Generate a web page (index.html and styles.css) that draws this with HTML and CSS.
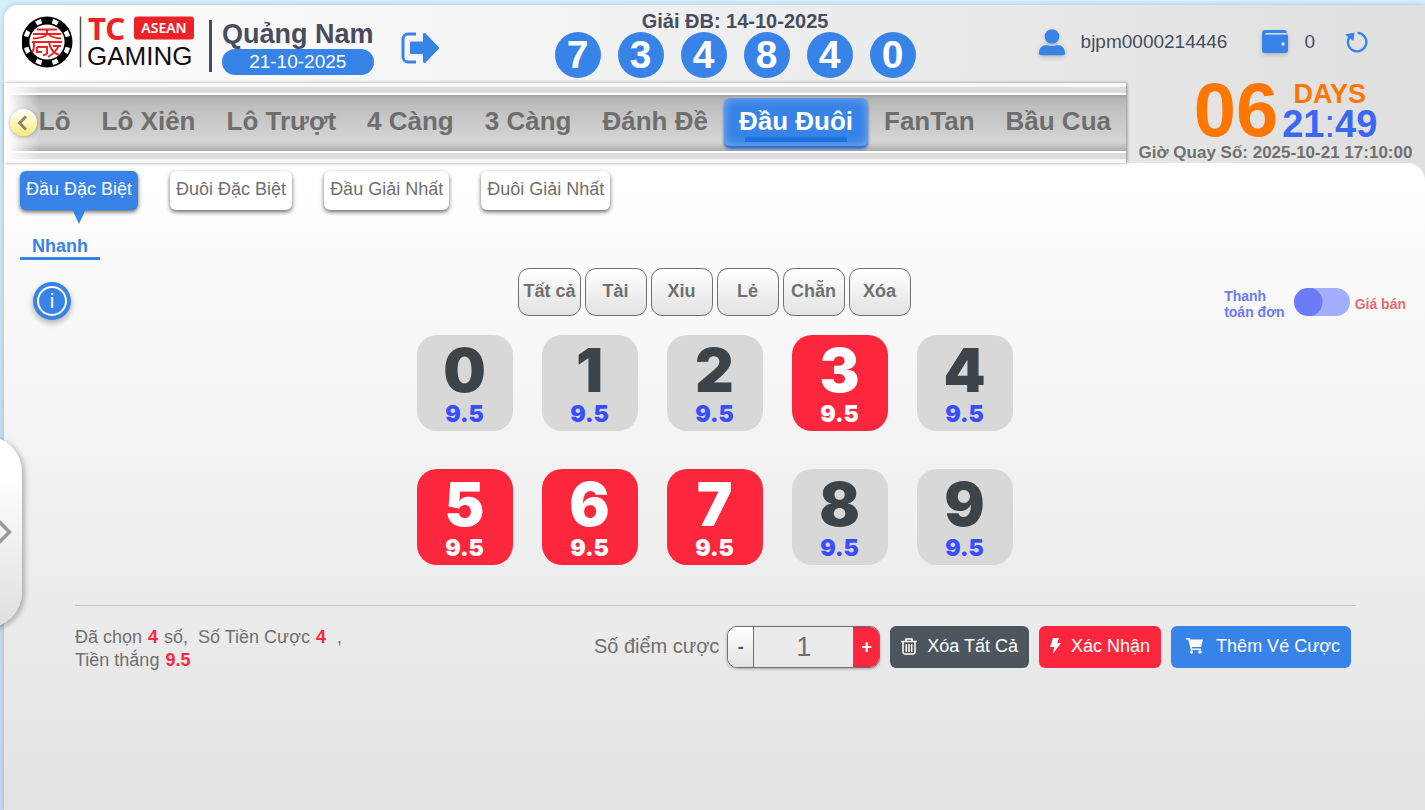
FILE: index.html
```html
<!DOCTYPE html>
<html lang="vi">
  <head>
    <meta charset="UTF-8" />
    <meta name="viewport" content="width=device-width, initial-scale=1.0" />
    <title>TC Gaming - Quảng Nam</title>
    <link rel="stylesheet" href="styles.css">
  </head>
  <body>
    <div class="app">
      <header class="header">
        <svg class="logo" width="174" height="54" viewBox="0 0 174 54" role="img" aria-label="TC Gaming ASEAN">
          <circle cx="25" cy="27" r="25.5" fill="#000" />
          <circle cx="25" cy="27" r="21.5" fill="none" stroke="#fff" stroke-width="4.6" pathLength="80" stroke-dasharray="3.4 6.6" stroke-dashoffset="-3.3" />
          <circle cx="25" cy="27" r="17.6" fill="#fff" />
          <g fill="none" stroke="#ec2227" stroke-width="2">
            <path d="M15 14.500h20M11 19h28M25 14.500v4.500c-1 2.500-5 4-14 4.500M26 19c2 2.500 6 4 13 4.500" />
            <path d="M10 27h30M12 27v4c0 4-1 5-2 6M15 32h10v6c0 1.500-2 2-4 2M15 32v5h5M27 27c1 6 4 11 10 13M37 30c-2 5-6 9-11 12M31 31h8" />
          </g>
          <path d="M58.500 1.500v51" stroke="#555" stroke-width="1.500" />
          <rect x="112" y="1.500" width="60" height="23" rx="3" fill="#ec2227" />
          <text x="66" y="25" class="logo-tc">TC</text>
          <text x="142" y="18" class="logo-region">ASEAN</text>
          <text x="65" y="50" class="logo-name">GAMING</text>
        </svg>

        <div class="game">
          <h1>Quảng Nam</h1>
          <span class="game-date">21-10-2025</span>
        </div>
        <button class="icon-btn exit-btn" aria-label="Thoát">
          <svg width="38" height="32" viewBox="0 0 38 32">
            <path d="M15 2H7a5 5 0 0 0-5 5v18a5 5 0 0 0 5 5h8" fill="none" stroke="#3883e7" stroke-width="3" />
            <path d="M9 10.500a1 1 0 0 1 1-1h12V2.500a1.500 1.500 0 0 1 2.600-1l13 13.500a1.500 1.500 0 0 1 0 2l-13 13.500a1.500 1.500 0 0 1-2.600-1v-7.500H10a1 1 0 0 1-1-1z" fill="#3883e7" />
          </svg>
        </button>

        <div class="result">
          <div class="result-title">Giải ĐB: 14-10-2025</div>
          <div class="balls">
            <span>7</span><span>3</span><span>4</span><span>8</span><span>4</span><span>0</span>
          </div>
        </div>

        <div class="account">
          <svg class="shade" width="26" height="27" viewBox="0 0 26 27" fill="#3883e7">
            <circle cx="13" cy="7.500" r="7.300" />
            <path d="M0 24c0-5 3-8 8-8 3 1.200 7 1.200 10 0 5 0 8 3 8 8 0 1.500-.8 2.200-2 2.200H2C.8 26.200 0 25.500 0 24z" />
          </svg>
          <span class="username">bjpm0000214446</span>
          <svg class="shade wallet" width="26" height="24" viewBox="0 0 26 24">
            <path d="M3 0h20a1.500 1.500 0 0 1 1.500 1.500V4A3 3 0 0 1 26 7v13a3 3 0 0 1-3 3H3a3 3 0 0 1-3-3V3a3 3 0 0 1 3-3z" fill="#3883e7" />
            <path d="M3.500 3.800H24.500" stroke="#e4e4e4" stroke-width="1.500" />
            <circle cx="21" cy="14" r="1.700" fill="#e4e4e4" />
          </svg>
          <span class="balance">0</span>
          <button class="icon-btn" aria-label="Làm mới">
            <svg width="24" height="22" viewBox="0 0 24 22">
              <path d="M12.500 1.900A9.200 9.200 0 1 1 4.500 6" fill="none" stroke="#3883e7" stroke-width="2.400" />
              <path d="M0 3.500l9.500-2L8.500 10z" fill="#3883e7" />
            </svg>
          </button>
        </div>
      </header>

      <div class="topbar">
        <nav class="menu">
          <div class="menu-track">
            <a href="#">Lô</a>
            <a href="#">Lô Xiên</a>
            <a href="#">Lô Trượt</a>
            <a href="#">4 Càng</a>
            <a href="#">3 Càng</a>
            <a href="#">Đánh Đề</a>
            <a href="#" class="active">Đầu Đuôi</a>
            <a href="#">FanTan</a>
            <a href="#">Bầu Cua</a>
          </div>
          <div class="menu-fade"></div>
          <button class="menu-prev" aria-label="Trước">
            <svg width="13" height="16" viewBox="0 0 13 16">
              <path d="M9 1.500L2.500 8l6.500 6.500" fill="none" stroke="#8a8877" stroke-width="3" />
            </svg>
          </button>
        </nav>

        <div class="countdown">
          <div class="countdown-main">
            <span class="countdown-days">06</span>
            <div class="countdown-side">
              <span class="countdown-unit">DAYS</span>
              <span class="countdown-time">21<i>:</i>49</span>
            </div>
          </div>
          <div class="draw-time">Giờ Quay Số: 2025-10-21 17:10:00</div>
        </div>
      </div>

      <main class="board">
        <div class="tabs">
          <button class="tab active">Đầu Đặc Biệt</button>
          <button class="tab">Đuôi Đặc Biệt</button>
          <button class="tab">Đầu Giải Nhất</button>
          <button class="tab">Đuôi Giải Nhất</button>
        </div>
        <a href="#" class="mode">Nhanh</a>

        <div class="tools">
          <button class="info-btn" aria-label="Hướng dẫn"><span>i</span></button>
          <div class="filters">
            <button>Tất cả</button>
            <button>Tài</button>
            <button>Xỉu</button>
            <button>Lẻ</button>
            <button>Chẵn</button>
            <button>Xóa</button>
          </div>
          <label class="price-switch">
            <span class="price-single">Thanh<br>toán đơn</span>
            <input type="checkbox" />
            <span class="price-sell">Giá bán</span>
          </label>
        </div>

        <div class="numbers">
          <button class="number"><b>0</b><span>9.5</span></button>
          <button class="number"><b>1</b><span>9.5</span></button>
          <button class="number"><b>2</b><span>9.5</span></button>
          <button class="number selected"><b>3</b><span>9.5</span></button>
          <button class="number"><b>4</b><span>9.5</span></button>
          <button class="number selected"><b>5</b><span>9.5</span></button>
          <button class="number selected"><b>6</b><span>9.5</span></button>
          <button class="number selected"><b>7</b><span>9.5</span></button>
          <button class="number"><b>8</b><span>9.5</span></button>
          <button class="number"><b>9</b><span>9.5</span></button>
        </div>

        <div class="bet">
          <div class="summary">
            <div>Đã chọn <b>4</b> số,&nbsp; Số Tiền Cược <b>4</b>&nbsp; ,</div>
            <div>Tiền thắng <b>9.5</b></div>
          </div>
          <label class="points-label" for="points">Số điểm cược</label>
          <div class="stepper">
            <button class="minus">-</button>
            <input type="text" id="points" value="1" />
            <button class="plus">+</button>
          </div>
          <button class="action clear-btn">
            <svg width="16" height="17" viewBox="0 0 16 17" fill="none" stroke="#fff" stroke-width="1.500">
              <path d="M0 3.500h16M5 3V1h6v2M2 4v10.500A1.700 1.700 0 0 0 3.700 16h8.600a1.700 1.700 0 0 0 1.700-1.500V4M5.300 6v8M8 6v8M10.700 6v8" />
            </svg>
            Xóa Tất Cả
          </button>
          <button class="action confirm-btn">
            <svg width="11" height="16" viewBox="0 0 11 16" fill="#fff">
              <path d="M3 0h6L7.300 5H11L2.800 16l1.400-7H0z" />
            </svg>
            Xác Nhận
          </button>
          <button class="action cart-btn">
            <svg width="17" height="16" viewBox="0 0 17 16">
              <path d="M0 .8h3l2.500 10.500H15" fill="none" stroke="#fff" stroke-width="1.600" />
              <path d="M3.500 1.500H17L15 9H5.200z" fill="#fff" />
              <circle cx="5.500" cy="14" r="1.700" fill="#fff" />
              <circle cx="14" cy="14" r="1.700" fill="#fff" />
            </svg>
            Thêm Vé Cược
          </button>
        </div>
      </main>
    </div>

    <button class="drawer" aria-label="Mở">
      <svg width="14" height="28" viewBox="0 0 14 28">
        <path d="M-3 1.500L9.500 14-3 26.500" fill="none" stroke="#999" stroke-width="3.500" />
      </svg>
    </button>
  </body>
</html>
```

FILE: styles.css
```css
* {
  box-sizing: border-box;
}
body {
  margin: 0;
  padding: 5px 0 0 4px;
  min-height: 100vh;
  font-family: "Liberation Sans", Arial, sans-serif;
  color: #707070;
  background: linear-gradient(#d5effd, #c5e2f0 50%, #c9d8f6);
}
button {
  font-family: inherit;
  cursor: pointer;
  border: none;
  padding: 0;
}
a {
  text-decoration: none;
}
.app {
  min-height: calc(100vh - 5px);
  display: flex;
  flex-direction: column;
  border-radius: 14px 0 0 0;
  background: linear-gradient(90deg, #fff, #dfdfdf);
  box-shadow: 0 0 5px rgba(0, 0, 0, 0.2);
}

/* header */
.header {
  display: flex;
  align-items: center;
  height: 78px;
  padding: 0 56px 0 18px;
}
.logo {
  display: block;
  flex: none;
  margin-bottom: 4px;
}
.logo-tc {
  font: bold 31px "Noto Sans", sans-serif;
  fill: #ec2227;
}
.logo-region {
  font: 600 14px "Noto Sans", sans-serif;
  fill: #fff;
  text-anchor: middle;
}
.logo-name {
  font: 26px "Liberation Sans", sans-serif;
  fill: #111;
}
.game {
  position: relative;
  margin: 6px 0 0 13px;
  padding-left: 13px;
}
.game::before {
  content: "";
  position: absolute;
  left: 0;
  top: 0;
  width: 3px;
  height: 52px;
  background: #474d5f;
}
.game h1 {
  margin: 0;
  font-size: 27px;
  line-height: 29px;
  color: #474d5f;
}
.game-date {
  display: block;
  height: 26px;
  border-radius: 13px;
  background: #3883e7;
  color: #fff;
  font-size: 19px;
  line-height: 25px;
  text-align: center;
}
.icon-btn {
  background: none;
  display: flex;
}
.exit-btn {
  margin: 8px 0 0 27px;
}
.result {
  margin-left: 116px;
  text-align: center;
  color: #474d5f;
  font-size: 20px;
  font-weight: bold;
}
.result-title {
  line-height: 22px;
}
.balls {
  display: flex;
  gap: 17px;
}
.balls span {
  width: 46px;
  height: 46px;
  border-radius: 50%;
  background: #3883e7;
  color: #fff;
  font-size: 39px;
  line-height: 45px;
}
.account {
  display: flex;
  align-items: center;
  margin: 0 0 4px auto;
  font-size: 19px;
  color: #474d5f;
}
.shade {
  filter: drop-shadow(0 2px 2px rgba(0, 0, 0, 0.2));
}
.username {
  margin: 0 35px 0 16px;
}
.balance {
  margin: 0 30px 0 16px;
}

/* game menu + countdown */
.topbar {
  display: flex;
  height: 80px;
}
.menu {
  position: relative;
  flex: 1;
  min-width: 0;
  border: solid #f8f8f8;
  border-width: 4px 0;
  box-shadow: 1px 0 3px rgba(0, 0, 0, 0.4);
}
.menu-track {
  display: flex;
  justify-content: flex-end;
  align-items: center;
  gap: 1px;
  height: 72px;
  padding-bottom: 2px;
  overflow: hidden;
  background: linear-gradient(#dcdcdc 6px, #fff 6px, #fff 8px, #a2a2a2 8px, #b4b4b4 12px, #c0c0c0 20px, #d2d2d2 50px, #d2d2d2 56px, #aaa 64px, #fff 64px, #fff 66px, #dcdcdc 66px);
}
.menu-track a {
  flex: none;
  height: 48px;
  padding: 0 15px;
  border-radius: 6px;
  font-size: 26px;
  font-weight: bold;
  line-height: 47px;
  color: #6e6e6e;
}
.menu-track a.active {
  position: relative;
  background: #3883e7;
  color: #fff;
  box-shadow: 0 3px 3px #2a6ac6, inset 0 0 10px rgba(255, 255, 255, 0.4);
}
.menu-track a.active::after {
  content: "";
  position: absolute;
  left: 21px;
  right: 21px;
  bottom: 4px;
  height: 5px;
  background: #1d70dd;
}
.menu-fade {
  position: absolute;
  top: -4px;
  bottom: -4px;
  left: 0;
  width: 36px;
  background: linear-gradient(90deg, #fff 10%, rgba(255, 255, 255, 0));
}
.menu-prev {
  position: absolute;
  left: 6px;
  top: 22px;
  width: 27px;
  height: 27px;
  display: flex;
  align-items: center;
  justify-content: center;
  border-radius: 50%;
  background: linear-gradient(#fff, #fdea75);
  box-shadow: 0 1px 4px rgba(0, 0, 0, 0.3);
}
.countdown {
  width: 299px;
  text-align: center;
}
.countdown-main {
  display: flex;
  justify-content: center;
  align-items: center;
  height: 54px;
  gap: 4px;
  padding-left: 20px;
}
.countdown-days {
  font-size: 76px;
  font-weight: bold;
  line-height: 54px;
  color: #f70;
}
.countdown-side {
  display: flex;
  flex-direction: column;
}
.countdown-unit {
  font-size: 27px;
  font-weight: bold;
  line-height: 27px;
  color: #f70;
}
.countdown-time {
  font-size: 38px;
  font-weight: bold;
  line-height: 32px;
  color: #3a68f2;
}
.countdown-time i {
  font-style: normal;
  font-weight: normal;
}
.draw-time {
  font-size: 17px;
  font-weight: bold;
  line-height: 31px;
  white-space: nowrap;
}

/* board */
.board {
  flex: 1;
  padding: 8px 16px 0;
  border-radius: 0 18px 0 0;
  background: linear-gradient(#fff, #e3e3e3);
}
.tabs {
  display: flex;
  gap: 32px;
}
.tab {
  position: relative;
  height: 39px;
  padding: 0 6px 2px;
  border-radius: 6px;
  background: #fff;
  color: #707070;
  font-size: 18px;
  box-shadow: 0 2px 4px rgba(0, 0, 0, 0.6);
}
.tab.active {
  background: #3883e7;
  color: #fff;
}
.tab.active::after {
  content: "";
  position: absolute;
  top: 38px;
  left: 50%;
  margin-left: -7px;
  border: solid transparent;
  border-width: 15px 7px 0;
  border-top-color: #3883e7;
}
.mode {
  display: block;
  width: 80px;
  height: 28px;
  margin-top: 22px;
  border-bottom: 3px solid #3883e7;
  color: #3883e7;
  font-size: 18px;
  font-weight: bold;
  line-height: 28px;
  text-align: center;
}
.tools {
  display: grid;
  grid-template-columns: 1fr auto 1fr;
  align-items: start;
  margin-top: 8px;
}
.info-btn {
  display: flex;
  align-items: center;
  justify-content: center;
  width: 38px;
  height: 38px;
  margin: 14px 0 0 13px;
  border-radius: 50%;
  background: #3883e7;
  box-shadow: 0 3px 6px rgba(0, 0, 0, 0.3);
}
.info-btn span {
  width: 30px;
  height: 30px;
  border: 2px solid #fff;
  border-radius: 50%;
  color: #fff;
  font-size: 20px;
  line-height: 26px;
}
.filters {
  display: flex;
  gap: 4px;
}
.filters button {
  min-width: 62px;
  height: 48px;
  padding: 0 4px 2px;
  border: 1px solid #707070;
  border-radius: 11px;
  background: linear-gradient(#fff, #e2e2e2);
  color: #707070;
  font-size: 18px;
  font-weight: bold;
}
.price-switch {
  display: flex;
  align-items: center;
  justify-self: end;
  margin: 20px 3px 0 0;
  font-size: 14px;
  font-weight: bold;
  line-height: 16px;
}
.price-single {
  color: #6b7af5;
}
.price-sell {
  color: #e46a6f;
}
.price-switch input {
  appearance: none;
  width: 56px;
  height: 28px;
  margin: 0 5px 4px 9px;
  border-radius: 14px;
  background: radial-gradient(circle at 14px 14px, #6b7af5 14px, #a3aeff 15px);
  cursor: pointer;
}
.numbers {
  display: grid;
  grid-template-columns: repeat(5, 96px);
  justify-content: center;
  gap: 38px 29px;
  margin-top: 15px;
}
.number {
  display: flex;
  flex-direction: column;
  align-items: center;
  height: 96px;
  padding-top: 5px;
  border-radius: 20px;
  background: #d8d8d8;
  font-family: "Arial Black", Inter, sans-serif;
  font-weight: 900;
}
.number b {
  font-size: 60px;
  font-weight: 900;
  line-height: 60px;
  color: #3c444a;
}
.number span {
  font-size: 23px;
  line-height: 29px;
  color: #3a4dff;
}
.number.selected {
  background: #fd273d;
}
.number.selected b,
.number.selected span {
  color: #fff;
}

/* bet bar */
.bet {
  display: flex;
  align-items: flex-start;
  gap: 10px;
  margin: 40px 53px 0 55px;
  padding: 20px 5px 0 0;
  border-top: 1px solid #c4c4c4;
}
.summary {
  margin-right: auto;
  font-size: 18px;
  line-height: 23px;
}
.summary b {
  margin: 0 1px;
  color: #fd273d;
}
.points-label {
  margin-right: -2px;
  font-size: 20px;
  line-height: 40px;
}
.stepper {
  display: flex;
  height: 42px;
  border: 1px solid #707070;
  border-radius: 10px;
  overflow: hidden;
  box-shadow: 0 1px 3px rgba(0, 0, 0, 0.3);
}
.stepper button {
  width: 25px;
  font-size: 18px;
  font-weight: bold;
}
.stepper .minus {
  background: linear-gradient(#fff, #e2e2e2);
  color: #4e565c;
}
.stepper .plus {
  background: #fd273d;
  color: #fff;
}
.stepper input {
  width: 101px;
  padding: 0;
  border: solid #707070;
  border-width: 0 1px;
  background: #ebebeb;
  color: #707070;
  font-family: inherit;
  font-size: 27px;
  text-align: center;
}
.action {
  display: flex;
  align-items: center;
  gap: 10px;
  height: 42px;
  padding: 0 11px 2px;
  border-radius: 6px;
  color: #fff;
  font-size: 18px;
}
.clear-btn {
  background: #4e565d;
}
.confirm-btn {
  background: #fd273d;
}
.cart-btn {
  gap: 13px;
  padding-left: 15px;
  background: #3883e7;
}

/* side drawer handle */
.drawer {
  position: absolute;
  left: -20px;
  top: 436px;
  width: 42px;
  height: 192px;
  display: flex;
  align-items: center;
  padding-left: 20px;
  border-radius: 0 36px 36px 0;
  background: linear-gradient(#fff 20%, #dfdfdf);
  box-shadow: 3px 2px 5px rgba(0, 0, 0, 0.25);
}
```
